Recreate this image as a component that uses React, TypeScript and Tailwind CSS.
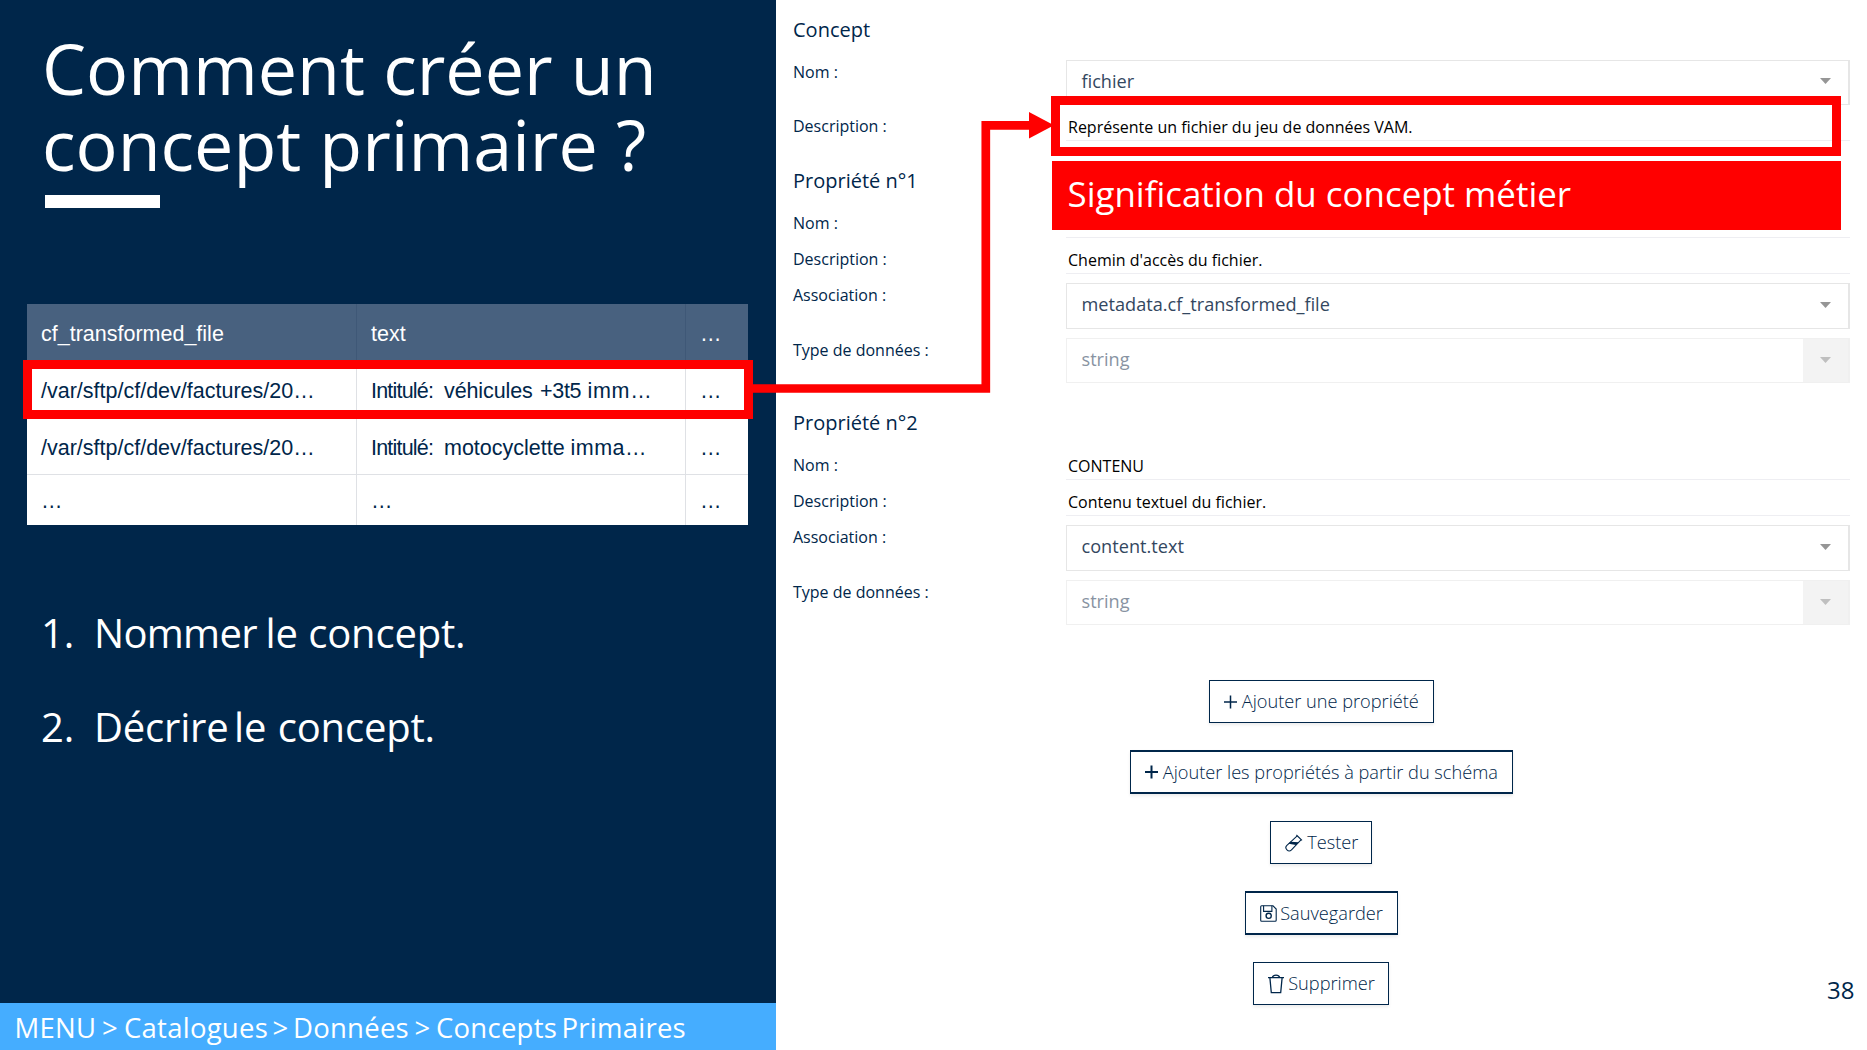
import React from "react";

type Word = { text: string; className?: string };

const tableRows: Word[][][] = [
  [
    [{ text: "/var/sftp/cf/dev/factures/20…" }],
    [
      { text: "Intitulé:", className: "w-[73px] tracking-[-0.8px]" },
      { text: "véhicules", className: "w-[96px] tracking-[-0.1px]" },
      { text: "+3t5", className: "w-[47.5px] tracking-[-0.3px]" },
      { text: "imm…", className: "tracking-[0.7px]" },
    ],
    [{ text: "…" }],
  ],
  [
    [{ text: "/var/sftp/cf/dev/factures/20…" }],
    [
      { text: "Intitulé:", className: "w-[73px] tracking-[-0.8px]" },
      { text: "motocyclette", className: "w-[126.5px]" },
      { text: "imma…", className: "tracking-[0.5px]" },
    ],
    [{ text: "…" }],
  ],
  [[{ text: "…" }], [{ text: "…" }], [{ text: "…" }]],
];

const steps: Word[][] = [
  [
    { text: "1.", className: "w-[53px]" },
    { text: "Nommer", className: "w-[171.5px] tracking-[-0.7px]" },
    { text: "le", className: "w-[42.8px]" },
    { text: "concept." },
  ],
  [
    { text: "2.", className: "w-[53px]" },
    { text: "Décrire", className: "w-[140px]" },
    { text: "le", className: "w-[43.8px]" },
    { text: "concept." },
  ],
];

const breadcrumb: Word[] = [
  { text: "MENU", className: "w-[87.5px]" },
  { text: ">", className: "w-[22px]" },
  { text: "Catalogues", className: "w-[148.5px]" },
  { text: ">", className: "w-[20.5px]" },
  { text: "Données", className: "w-[121.5px]" },
  { text: ">", className: "w-[21.5px]" },
  { text: "Concepts", className: "w-[125.5px]" },
  { text: "Primaires" },
];

function Words({ words }: { words: Word[] }) {
  return (
    <>
      {words.map((w, i) => (
        <span key={i} className={`inline-block whitespace-nowrap ${w.className ?? ""}`}>
          {w.text}
        </span>
      ))}
    </>
  );
}

const rowStyles = ["h-[56.5px]", "h-[57px]", "h-[50.5px]"];
const cellPads = ["pt-[4px]", "pt-[5px]", "pt-[2px]"];
const tableGrid = "grid grid-cols-[330px_329px_62px]";

function DataTable() {
  return (
    <div className="relative ml-[27px] mt-[96.5px] w-[721px] font-['Liberation_Sans',sans-serif] text-[21.5px] text-[#00264a]">
      <div className={`${tableGrid} h-[57px] bg-[#48617f] text-white`}>
        {["cf_transformed_file", "text", "…"].map((h, i) => (
          <div
            key={h}
            className={`flex items-center pl-[14px] pt-[4px] ${i < 2 ? "border-r border-[#3f5877]" : ""}`}
          >
            {h}
          </div>
        ))}
      </div>
      {tableRows.map((row, r) => (
        <div key={r} className={`${tableGrid} ${rowStyles[r]} bg-white`}>
          {row.map((words, c) => (
            <div
              key={c}
              className={`flex items-center border-[#dfe1e5] pl-[14px] ${cellPads[r]} ${c < 2 ? "border-r" : ""} ${r < 2 ? "border-b" : ""}`}
            >
              <Words words={words} />
            </div>
          ))}
        </div>
      ))}
      <div className="absolute -left-1 top-[56px] h-[59px] w-[730px] border-[9px] border-[#ff0000]" />
    </div>
  );
}

function Heading({ children, className = "" }: { children: React.ReactNode; className?: string }) {
  return <h2 className={`mb-[18.5px] h-6 text-[20px] leading-[26px] ${className}`}>{children}</h2>;
}

function Row({ label, children }: { label: string; children: React.ReactNode }) {
  return (
    <div className="mb-[9px] flex last:mb-0">
      <div className="w-[273px] shrink-0 text-[16px] leading-6">{label}</div>
      <div className="flex-1">{children}</div>
    </div>
  );
}

function Value({ children }: { children?: React.ReactNode }) {
  return (
    <div className="h-[27.3px] border-b border-[#eeeef2] pl-[2px] text-[16px] leading-[27px] text-black">{children}</div>
  );
}

function Caret({ className }: { className: string }) {
  return (
    <svg viewBox="0 0 11 6" className={`h-[6px] w-[11px] ${className}`} fill="currentColor">
      <path d="M0 0H11L5.5 6Z" />
    </svg>
  );
}

function Select({ value, disabled = false }: { value: string; disabled?: boolean }) {
  return (
    <div
      className={`flex h-[45.5px] border border-r-2 text-[18.15px] ${
        disabled ? "border-[#f0f0f0] text-[#8893a2]" : "border-[#e6e6e6] text-[#33475f]"
      }`}
    >
      <div className="flex-1 pl-[14.5px] leading-[41px]">{value}</div>
      <div className={`flex w-[45px] items-center justify-center ${disabled ? "bg-[#f3f3f3]" : ""}`}>
        <Caret className={disabled ? "mb-0.5 text-[#bfbfbf]" : "mb-0.5 text-[#969696]"} />
      </div>
    </div>
  );
}

function PlusIcon({ stroke }: { stroke: number }) {
  return (
    <svg viewBox="0 0 13 14" className="h-[14px] w-[13px]" stroke="currentColor" strokeWidth={stroke}>
      <path d="M0 7H13M6.5 0.5V13.5" />
    </svg>
  );
}

function TubeIcon() {
  return (
    <svg viewBox="0 0 18 18" className="h-[18px] w-[18px]" fill="none" stroke="currentColor" strokeWidth="1.1">
      <path d="M11.4 1L17 6.4M12.2 1.8L1.9 11.3A3.2 3.2 0 0 0 6.5 15.8L16.2 5.7" />
      <path d="M5.4 7.8L13.6 8.3L11 11L3.6 9.7Z" fill="currentColor" stroke="none" />
    </svg>
  );
}

function FloppyIcon() {
  return (
    <svg viewBox="0 0 17 17" className="h-[17px] w-[17px]" fill="none" stroke="currentColor" strokeWidth="1.1">
      <path d="M1.6 0.8H13L16.2 4V15.2Q16.2 16.2 15.2 16.2H1.6Q0.7 16.2 0.7 15.2V1.8Q0.7 0.8 1.6 0.8Z" />
      <path d="M3.6 0.8V6.4H11.9V0.8" />
      <circle cx="8.7" cy="10.8" r="2.6" strokeWidth="1.4" />
    </svg>
  );
}

function TrashIcon() {
  return (
    <svg viewBox="0 0 16 20" className="h-[20px] w-[16px]" fill="none" stroke="currentColor" strokeWidth="1.3">
      <path d="M0 3.7H16M4.4 3.4Q5 1.1 8 1.1T11.6 3.4M1.9 3.9L3.3 18.7H12.7L14.1 3.9" />
    </svg>
  );
}

function ActionButton({
  icon,
  children,
  className,
}: {
  icon: React.ReactNode;
  children: React.ReactNode;
  className: string;
}) {
  return (
    <button
      className={`flex items-center whitespace-nowrap border-[#00264a] bg-white pl-[14px] text-[18.2px] font-light shadow-[0_2px_3px_rgba(0,0,0,0.08)] ${className}`}
    >
      {icon}
      <span className="pt-px">{children}</span>
    </button>
  );
}

export default function App() {
  return (
    <div className="relative flex h-[1050px] w-[1867px] overflow-hidden bg-white font-['Open_Sans',sans-serif] text-[#00264a]">
      <aside className="flex w-[776px] shrink-0 flex-col bg-[#00264a] text-white">
        <h1 className="ml-[42px] mt-[30px] whitespace-nowrap text-[70px] leading-[76px]">
          Comment créer un
          <br />
          concept primaire ?
        </h1>
        <div className="ml-[45px] mt-[13px] h-[12.5px] w-[115px] bg-white" />
        <DataTable />
        <ol className="mt-[61.4px] text-[40px] leading-[94px] tracking-[-0.2px]">
          {steps.map((words, i) => (
            <li key={i} className="flex pl-[41px]">
              <Words words={words} />
            </li>
          ))}
        </ol>
        <footer className="mt-auto flex h-[47px] bg-[#45adff] pl-[14.5px] text-[27.5px] leading-[49px] tracking-[0.25px]">
          <Words words={breadcrumb} />
        </footer>
      </aside>

      <main className="flex flex-1 flex-col pl-[17px] pr-[17px] pt-[17px]">
        <Heading>Concept</Heading>
        <section>
          <Row label="Nom :">
            <Select value="fichier" />
          </Row>
          <Row label="Description :">
            <Value>Représente un fichier du jeu de données VAM.</Value>
          </Row>
        </section>
        <Heading className="mt-[27px]">Propriété n°1</Heading>
        <section>
          <Row label="Nom :">
            <Value />
          </Row>
          <Row label="Description :">
            <Value>Chemin d'accès du fichier.</Value>
          </Row>
          <Row label="Association :">
            <Select value="metadata.cf_transformed_file" />
          </Row>
          <Row label="Type de données :">
            <Select value="string" disabled />
          </Row>
        </section>
        <Heading className="mt-[27px]">Propriété n°2</Heading>
        <section>
          <Row label="Nom :">
            <Value>CONTENU</Value>
          </Row>
          <Row label="Description :">
            <Value>Contenu textuel du fichier.</Value>
          </Row>
          <Row label="Association :">
            <Select value="content.text" />
          </Row>
          <Row label="Type de données :">
            <Select value="string" disabled />
          </Row>
        </section>
        <div className="mb-[45px] mt-auto flex flex-col items-center gap-[27px] pr-[0.6px]">
          <ActionButton className="h-[43px] w-[225px] gap-[5px] border" icon={<PlusIcon stroke={1.5} />}>
            Ajouter une propriété
          </ActionButton>
          <ActionButton className="h-[44px] w-[383px] gap-[5px] border border-y-2" icon={<PlusIcon stroke={2} />}>
            Ajouter les propriétés à partir du schéma
          </ActionButton>
          <ActionButton className="h-[43px] w-[102px] gap-[4px] border" icon={<TubeIcon />}>
            Tester
          </ActionButton>
          <ActionButton className="h-[44px] w-[153px] gap-[3.5px] border border-y-2" icon={<FloppyIcon />}>
            Sauvegarder
          </ActionButton>
          <ActionButton className="h-[43px] w-[136px] gap-[4px] border" icon={<TrashIcon />}>
            Supprimer
          </ActionButton>
        </div>
      </main>

      {/* Annotations laid over the form */}
      <svg
        viewBox="0 0 302 282"
        className="absolute left-[752px] top-[112px] h-[282px] w-[302px]"
        fill="none"
        stroke="#ff0000"
        strokeWidth="8.7"
      >
        <path d="M0 276.5H233.8V13.3H278" />
        <path d="M277 0L302 13.2L277 26.5Z" fill="#ff0000" stroke="none" />
      </svg>
      <div className="absolute left-[1051.4px] top-[96.4px] h-[59.4px] w-[789.2px] border-[9px] border-[#ff0000]" />
      <div className="absolute left-[1052.4px] top-[161.4px] h-[69px] w-[788.4px] bg-[#ff0000] pl-[15.2px] text-[34.9px] leading-[66px] text-white">
        Signification du concept métier
      </div>
      <div className="absolute left-[1827px] top-[974px] text-[24px] leading-8">38</div>
    </div>
  );
}
